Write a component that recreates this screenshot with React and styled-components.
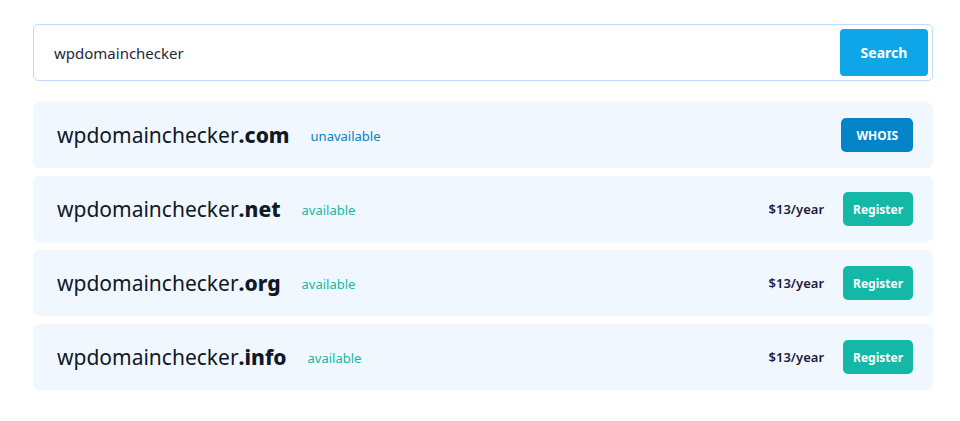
import styled, { createGlobalStyle } from "styled-components";

const GlobalStyle = createGlobalStyle`
  body {
    margin: 0;
    background: #ffffff;
    font-family: "Segoe UI", "Noto Sans", "Open Sans", sans-serif;
    color: #0f172a;
  }
  * { box-sizing: border-box; }
`;

const domains = [
  { name: "wpdomainchecker", tld: ".com", available: false },
  { name: "wpdomainchecker", tld: ".net", available: true, price: "$13/year" },
  { name: "wpdomainchecker", tld: ".org", available: true, price: "$13/year" },
  { name: "wpdomainchecker", tld: ".info", available: true, price: "$13/year" },
];

export default function App() {
  return (
    <>
      <GlobalStyle />
      <Page>
        <SearchBar>
          <SearchInput defaultValue="wpdomainchecker" />
          <SearchButton>Search</SearchButton>
        </SearchBar>
        <Results>
          {domains.map((d) => (
            <Row key={d.tld}>
              <Domain>
                {d.name}
                <b>{d.tld}</b>
              </Domain>
              <Status $available={d.available}>
                {d.available ? "available" : "unavailable"}
              </Status>
              <Actions>
                {d.price && <Price>{d.price}</Price>}
                <ActionButton $available={d.available}>
                  {d.available ? "Register" : "WHOIS"}
                </ActionButton>
              </Actions>
            </Row>
          ))}
        </Results>
      </Page>
    </>
  );
}

const Page = styled.div`
  width: 900px;
  margin: 24px 0 0 33px;
  display: flex;
  flex-direction: column;
  gap: 21px;
`;

const SearchBar = styled.div`
  height: 57px;
  display: flex;
  align-items: center;
  border: 1px solid #bfdbfe;
  border-radius: 5px;
  padding: 4px 4px 4px 20px;
  background: #fff;
`;

const SearchInput = styled.input`
  flex: 1;
  border: none;
  outline: none;
  font: inherit;
  font-size: 15px;
  color: #1e293b;
  background: transparent;
  padding: 0;
`;

const SearchButton = styled.button`
  width: 88px;
  height: 47px;
  border: none;
  border-radius: 4px;
  background: #0ea5e9;
  color: #fff;
  font: inherit;
  font-size: 14px;
  font-weight: 700;
`;

const Results = styled.div`
  display: flex;
  flex-direction: column;
  gap: 8px;
`;

const Row = styled.div`
  height: 66px;
  display: flex;
  align-items: center;
  padding: 0 20px 0 24px;
  background: #f0f7ff;
  border-radius: 7px;
`;

const Domain = styled.span`
  font-size: 21px;
  color: #111827;
  b {
    font-weight: 800;
  }
`;

const Status = styled.span`
  margin-left: 21px;
  margin-top: 1px;
  font-size: 13px;
  color: ${(p) => (p.$available ? "#14b8a6" : "#0284c7")};
`;

const Actions = styled.div`
  margin-left: auto;
  display: flex;
  align-items: center;
  gap: 19px;
`;

const Price = styled.span`
  font-size: 13px;
  font-weight: 600;
  color: #1e1b3a;
`;

const ActionButton = styled.button`
  height: 34px;
  padding: 0 ${(p) => (p.$available ? "10px" : "15px")};
  border: none;
  border-radius: 5px;
  background: ${(p) => (p.$available ? "#14b8a6" : "#0284c7")};
  color: #fff;
  font: inherit;
  font-size: 12px;
  font-weight: 700;
`;
